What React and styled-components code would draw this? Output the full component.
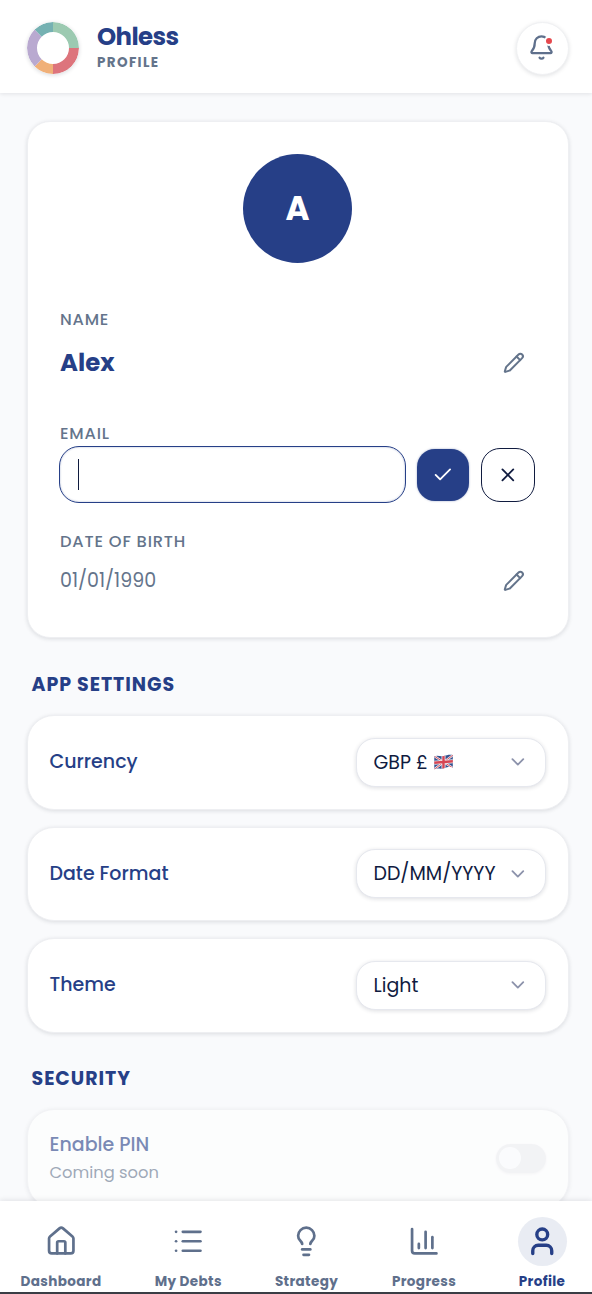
import React, { useState } from "react"
import styled, { createGlobalStyle } from "styled-components"
import {
	Bell,
	ChartColumn,
	Check,
	ChevronDown,
	House,
	Lightbulb,
	List,
	Pencil,
	User,
	X
} from "lucide-react"

const GlobalStyle = createGlobalStyle`
	*, *::before, *::after {
		box-sizing: border-box;
	}

	body {
		margin: 0;
		background: #f9fafc;
		font-family: Poppins, Inter, "Liberation Sans", sans-serif;
		-webkit-font-smoothing: antialiased;
	}

	button {
		font-family: inherit;
		padding: 0;
		cursor: pointer;
	}
`

const Screen = styled.div`
	height: 1294px;
	display: flex;
	flex-direction: column;
	overflow: hidden;
	background: #f9fafc;
`

const Header = styled.header`
	height: 93px;
	flex-shrink: 0;
	display: flex;
	align-items: center;
	padding: 3.5px 23.5px 0 27px;
	background: #fff;
	box-shadow: 0 1px 4px rgba(15, 23, 42, 0.1);
`

const LogoRing = styled.svg`
	width: 52px;
	height: 52px;
	border-radius: 50%;
	background: #fff;
	box-shadow: 0 1px 4px rgba(15, 23, 42, 0.16);
`

const Brand = styled.div`
	flex: 1;
	margin: -3px 0 0 18px;
`

const BrandName = styled.h1`
	margin: 0;
	font-size: 24.4px;
	line-height: 30px;
	font-weight: 700;
	letter-spacing: -0.6px;
	color: #263f87;
`

const PageName = styled.div`
	margin-top: 2px;
	font-size: 13.5px;
	line-height: 18px;
	font-weight: 700;
	letter-spacing: 1.35px;
	color: #64748b;
`

const BellButton = styled.button`
	position: relative;
	width: 53px;
	height: 53px;
	display: flex;
	align-items: center;
	justify-content: center;
	padding: 0 1px 1px 0;
	border: 1px solid #f0f1f3;
	border-radius: 50%;
	background: #fff;
	color: #5f708c;
	box-shadow: 0 1px 4px rgba(15, 23, 42, 0.13);
`

const UnreadDot = styled.span`
	position: absolute;
	top: 13.5px;
	right: 13.5px;
	width: 10px;
	height: 10px;
	border: 2px solid #fff;
	border-radius: 50%;
	background: #e5484d;
`

const Content = styled.main`
	flex: 1;
	min-height: 0;
	overflow: hidden;
	padding: 28px 23px 0 26.5px;
`

const ProfileCard = styled.section`
	height: 517px;
	padding: 32px 33px 0 32.5px;
	border: 1px solid #eeeff2;
	border-radius: 23px;
	background: #fff;
	box-shadow: 0 1px 4px rgba(15, 23, 42, 0.13);
`

const Avatar = styled.div`
	width: 109px;
	height: 109px;
	margin: 0 auto 47px;
	display: flex;
	align-items: center;
	justify-content: center;
	border-radius: 50%;
	background: #263f87;
	color: #fff;
	font-size: 32.6px;
	font-weight: 700;
`

const FieldLabel = styled.div`
	font-size: 16.3px;
	line-height: 20px;
	font-weight: 500;
	letter-spacing: 0.8px;
	color: #64748b;
`

const FieldRow = styled.div`
	height: ${(props) => props.$height};
	margin-bottom: ${(props) => props.$gap || 0};
	display: flex;
	align-items: center;
	justify-content: space-between;
	padding-right: 10px;
`

const NameValue = styled.div`
	padding-bottom: 2px;
	font-size: 24.4px;
	font-weight: 700;
	color: #263f87;
`

const DateValue = styled.div`
	font-size: 19px;
	color: #64748b;
`

const EditButton = styled.button`
	display: flex;
	border: 0;
	background: none;
	color: #64748b;
`

const EditRow = styled.div`
	display: flex;
	align-items: center;
	margin: 2px 0 29px -1px;
`

const EmailField = styled.div`
	width: 347px;
	height: 57px;
	display: flex;
	align-items: center;
	padding-left: 18px;
	border: 1.4px solid #263f87;
	border-radius: 20px;
	box-shadow: inset 0 0 2px rgba(38, 63, 135, 0.4);
`

const Caret = styled.span`
	width: 1.4px;
	height: 31px;
	background: #101b3f;
`

const SaveButton = styled.button`
	width: 52px;
	height: 52px;
	margin-left: 11px;
	display: flex;
	align-items: center;
	justify-content: center;
	border: 0;
	border-radius: 18px;
	background: #263f87;
	color: #fff;
	box-shadow: 0 0 2px rgba(38, 63, 135, 0.5);
`

const CancelButton = styled.button`
	width: 54px;
	height: 54px;
	margin-left: 12px;
	display: flex;
	align-items: center;
	justify-content: center;
	border: 1.4px solid #101b3f;
	border-radius: 19px;
	background: #fff;
	color: #101b3f;
`

const SectionTitle = styled.h2`
	margin: 0 0 0 5px;
	padding-top: ${(props) => props.$top};
	height: ${(props) => props.$height};
	font-size: 19px;
	line-height: 24px;
	font-weight: 700;
	letter-spacing: 0.95px;
	color: #263f87;
`

const SettingRow = styled.div`
	height: ${(props) => (props.$disabled ? "99px" : "94.5px")};
	margin-bottom: 17px;
	padding: 0 22px;
	display: flex;
	align-items: center;
	justify-content: space-between;
	border: 1px solid #eeeff2;
	border-radius: 27px;
	background: #fff;
	box-shadow: 0 1px 4px rgba(15, 23, 42, 0.13);
	opacity: ${(props) => (props.$disabled ? 0.6 : 1)};
`

const SettingName = styled.div`
	font-size: 19px;
	line-height: 28px;
	font-weight: 500;
	color: #263f87;
`

const SettingHint = styled.div`
	font-size: 16.3px;
	line-height: 27px;
	color: #64748b;
`

const Select = styled.button`
	width: 190px;
	height: 49px;
	padding: 0 16.5px 0 16.5px;
	display: flex;
	align-items: center;
	border: 1px solid #e6e8ee;
	border-radius: 19px;
	background: #fff;
	box-shadow: 0 1px 4px rgba(15, 23, 42, 0.14);
	font-size: 19px;
	color: #101b3f;

	> svg:last-child {
		margin-left: auto;
		color: #8c92ab;
	}
`

const Flag = styled.svg`
	width: 19px;
	height: 16px;
	margin-left: 6px;
`

const Toggle = styled.span`
	width: 50px;
	height: 29px;
	display: flex;
	align-items: center;
	padding-left: 3px;
	border-radius: 15px;
	background: #eff0f2;
	box-shadow: 0 1px 3px rgba(15, 23, 42, 0.06);
`

const Knob = styled.span`
	width: 22px;
	height: 22px;
	border-radius: 50%;
	background: #fcfdfe;
`

const NavBar = styled.nav`
	position: relative;
	height: 93.5px;
	flex-shrink: 0;
	display: flex;
	justify-content: space-between;
	padding: 16px 18px 0 20.5px;
	border-bottom: 2px solid #3a3d45;
	background: #fff;
	box-shadow: 0 -1px 5px rgba(15, 23, 42, 0.1);
`

const NavItem = styled.a`
	width: ${(props) => props.$width};
	display: flex;
	flex-direction: column;
	align-items: center;
	font-size: 13.57px;
	line-height: 18px;
	font-weight: 700;
	letter-spacing: 0.34px;
	white-space: nowrap;
	color: ${(props) => (props.$active ? "#263f87" : "#5f708c")};
`

const NavIcon = styled.span`
	width: 49px;
	height: 49px;
	margin-bottom: 7px;
	display: flex;
	align-items: center;
	justify-content: center;
	border-radius: 50%;
	background: ${(props) => (props.$active ? "#e9ecf3" : "none")};
`

const logoSegments = [
	{ color: "#9ccab1", start: 0, size: 2 },
	{ color: "#dd747c", start: 2, size: 2 },
	{ color: "#f0b078", start: 4, size: 1 },
	{ color: "#b9a9d0", start: 5, size: 2 },
	{ color: "#75b1b2", start: 7, size: 1 }
]

const navItems = [
	{ label: "Dashboard", icon: House, width: "81px" },
	{ label: "My Debts", icon: List, width: "66px" },
	{ label: "Strategy", icon: Lightbulb, width: "63px" },
	{ label: "Progress", icon: ChartColumn, width: "64.5px" },
	{ label: "Profile", icon: User, width: "64px" }
]

const Logo = () => (
	<LogoRing viewBox="0 0 52 52">
		{logoSegments.map(({ color, start, size }) => (
			<circle
				key={color}
				cx="26"
				cy="26"
				r="21"
				fill="none"
				stroke={color}
				strokeWidth="10"
				pathLength="8"
				strokeDasharray={`${size} ${8 - size}`}
				transform={`rotate(${start * 45 - 90} 26 26)`}
			/>
		))}
	</LogoRing>
)

const UnionFlag = () => (
	<Flag viewBox="0 0 19 16">
		<clipPath id="flag">
			<path d="M.3 2.400C4 .8 6 3 10 1.900 13 1 15 .2 18.800.9V13.400C15 12.600 13 13.400 10 14.300 6 15.300 4 13.600.3 15.200Z" />
		</clipPath>
		<g clipPath="url(#flag)">
			<path fill="#33518f" d="M0 0h19v16H0z" />
			<path stroke="#f1eef2" strokeWidth="2.2" d="M0 2 19 14M0 15.500 19 1" />
			<path stroke="#d64553" strokeWidth="0.9" d="M0 2 19 14M0 15.500 19 1" />
			<path stroke="#f1eef2" strokeWidth="4" d="M9.500 0v16M0 8.800 19 7.200" />
			<path stroke="#d64553" strokeWidth="2.4" d="M9.500 0v16M0 8.800 19 7.200" />
		</g>
	</Flag>
)

const ProfilePage = () => {
	const [activeTab, setActiveTab] = useState("Profile")

	return (
		<Screen>
			<GlobalStyle />
			<Header>
				<Logo />
				<Brand>
					<BrandName>Ohless</BrandName>
					<PageName>PROFILE</PageName>
				</Brand>
				<BellButton aria-label="Notifications">
					<Bell size={27} />
					<UnreadDot />
				</BellButton>
			</Header>

			<Content>
				<ProfileCard>
					<Avatar>A</Avatar>
					<FieldLabel>NAME</FieldLabel>
					<FieldRow $height="66px" $gap="28px">
						<NameValue>Alex</NameValue>
						<EditButton aria-label="Edit name">
							<Pencil size={21.7} strokeWidth={2.2} />
						</EditButton>
					</FieldRow>
					<FieldLabel>EMAIL</FieldLabel>
					<EditRow>
						<EmailField>
							<Caret />
						</EmailField>
						<SaveButton aria-label="Save">
							<Check size={21.7} />
						</SaveButton>
						<CancelButton aria-label="Cancel">
							<X size={21.7} />
						</CancelButton>
					</EditRow>
					<FieldLabel>DATE OF BIRTH</FieldLabel>
					<FieldRow $height="57px">
						<DateValue>01/01/1990</DateValue>
						<EditButton aria-label="Edit date of birth">
							<Pencil size={21.7} strokeWidth={2.2} />
						</EditButton>
					</FieldRow>
				</ProfileCard>

				<SectionTitle $top="34.5px" $height="77px">
					APP SETTINGS
				</SectionTitle>
				<SettingRow>
					<SettingName>Currency</SettingName>
					<Select>
						<span>GBP £</span>
						<UnionFlag />
						<ChevronDown size={21.7} />
					</Select>
				</SettingRow>
				<SettingRow>
					<SettingName>Date Format</SettingName>
					<Select>
						<span>DD/MM/YYYY</span>
						<ChevronDown size={21.7} />
					</Select>
				</SettingRow>
				<SettingRow>
					<SettingName>Theme</SettingName>
					<Select>
						<span>Light</span>
						<ChevronDown size={21.7} />
					</Select>
				</SettingRow>

				<SectionTitle $top="17px" $height="59px">
					SECURITY
				</SectionTitle>
				<SettingRow $disabled>
					<div>
						<SettingName>Enable PIN</SettingName>
						<SettingHint>Coming soon</SettingHint>
					</div>
					<Toggle>
						<Knob />
					</Toggle>
				</SettingRow>
			</Content>

			<NavBar>
				{navItems.map(({ label, icon: Icon, width }) => (
					<NavItem
						key={label}
						$width={width}
						$active={label === activeTab}
						onClick={() => setActiveTab(label)}
					>
						<NavIcon $active={label === activeTab}>
							<Icon size={32.5} strokeWidth={label === activeTab ? 2.5 : 2} />
						</NavIcon>
						{label}
					</NavItem>
				))}
			</NavBar>
		</Screen>
	)
}

export default ProfilePage
